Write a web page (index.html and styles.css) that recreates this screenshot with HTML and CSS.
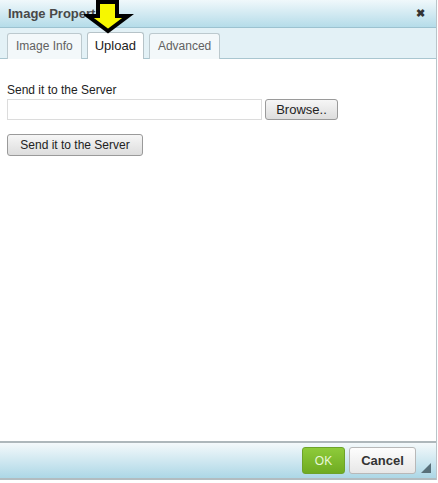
FILE: index.html
```html
<!DOCTYPE html>
<html lang="en">
<head>
  <meta charset="UTF-8" />
  <title>Image Properties</title>
  <link rel="stylesheet" href="styles.css">
</head>
<body>
  <div class="dialog">
    <div class="title-bar">
      <span class="title">Image Properties</span>
      <span class="close">&#x2716;</span>
      <svg class="pointer" width="50" height="38" viewBox="0 0 50 38">
        <polygon points="14,3 33,3 33,17 44,17 24,32 4,17 14,17" fill="#f7f700" stroke="#000" stroke-width="4" stroke-linejoin="miter"/>
      </svg>
    </div>
    <div class="tabs">
      <div class="tab">Image Info</div>
      <div class="tab active">Upload</div>
      <div class="tab">Advanced</div>
    </div>
    <div class="content">
      <label class="field-label">Send it to the Server</label>
      <div class="file-row">
        <div class="file-input"></div>
        <button class="btn browse">Browse..</button>
      </div>
      <button class="btn send">Send it to the Server</button>
    </div>
    <div class="footer">
      <button class="ok-btn">OK</button>
      <button class="cancel-btn">Cancel</button>
      <span class="resize"></span>
    </div>
  </div>
  <div class="behind"></div>
</body>
</html>
```

FILE: styles.css
```css
body { margin: 0; font-family: "Liberation Sans", Arial, sans-serif; font-size: 12px; color: #222; background: #fff; width: 438px; height: 483px; overflow: hidden; }
.dialog { width: 437px; height: 480px; border-right: 1px solid #b9c4c9; display: flex; flex-direction: column; box-sizing: border-box; }
.title-bar { position: relative; height: 28px; flex: none; background: linear-gradient(#f0f8fb, #b5dce9); border-bottom: 1px solid #9cc2d0; display: flex; align-items: center; justify-content: space-between; padding: 0 11px 0 8px; box-sizing: border-box; }
.title { font-weight: bold; font-size: 13px; color: #484848; }
.close { font-size: 11px; color: #333; font-weight: bold; }
.pointer { position: absolute; left: 84px; top: -1px; }
.tabs { height: 31px; flex: none; background: #e3f1f6; border-bottom: 1px solid #a9c6d0; display: flex; align-items: flex-end; gap: 5px; padding-left: 7px; box-sizing: border-box; }
.tab { height: 25px; margin-bottom: -1px; padding: 0 8px; border: 1px solid #bcc9ce; border-bottom: none; border-radius: 3px 3px 0 0; background: #f3f8fa; color: #616161; line-height: 24px; font-size: 12px; }
.tab.active { background: #fff; color: #222; border-color: #b6c3c8; height: 26px; padding: 0 7px; font-size: 13px; line-height: 25px; }
.content { flex: 1; background: #fff; padding: 24px 7px 0; }
.field-label { display: block; font-size: 12px; color: #222; margin-bottom: 2px; }
.file-row { display: flex; gap: 3px; margin-bottom: 14px; }
.file-input { width: 255px; height: 21px; border: 1px solid #dcdcdc; box-sizing: border-box; }
.btn { font-family: "Liberation Sans", Arial, sans-serif; font-size: 12px; color: #222; border: 1px solid #9a9a9a; border-radius: 3px; background: linear-gradient(#f6f6f6, #dddddd); padding: 0; }
.browse { width: 73px; height: 21px; font-size: 13px; }
.send { width: 136px; height: 22px; }
.footer { height: 39px; flex: none; border-top: 2px solid #aeb7bb; border-bottom: 2px solid #b2bcc0; background: linear-gradient(#f4f9fb, #acd7e6); display: flex; align-items: center; justify-content: flex-end; gap: 4px; padding-right: 20px; box-sizing: border-box; position: relative; }
.ok-btn { width: 43px; height: 27px; border: 1px solid #6ea32a; border-radius: 3px; background: linear-gradient(#8ecb3a, #6fab22); color: #e8f7d6; font-family: "Liberation Sans", Arial, sans-serif; font-size: 12px; }
.cancel-btn { width: 67px; height: 27px; border: 1px solid #b8b8b8; border-radius: 3px; background: linear-gradient(#fdfdfd, #e7e7e7); color: #333; font-family: "Liberation Sans", Arial, sans-serif; font-size: 13px; font-weight: bold; }
.resize { position: absolute; right: 5px; bottom: 5px; width: 0; height: 0; border-left: 10px solid transparent; border-bottom: 10px solid #58707a; }
.behind { height: 3px; }
```
